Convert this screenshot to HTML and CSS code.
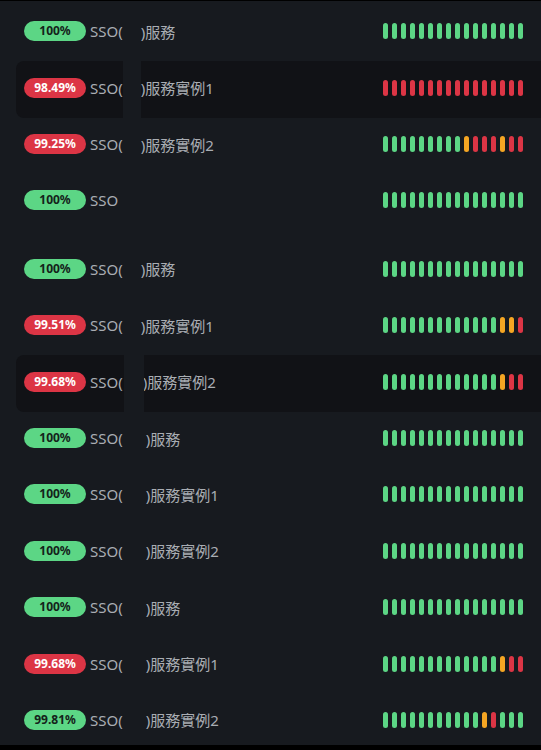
FILE: index.html
```html
<!DOCTYPE html>
<html lang="zh-Hant">
<head>
<meta charset="utf-8">
<title>SSO 服務</title>
<link rel="stylesheet" href="styles.css">
</head>
<body>
<div class="panel">
  <div class="group">
    <div class="row">
      <span class="badge ok">100%</span>
      <div class="name">SSO(<span class="redact"></span>)服務</div>
      <div class="bars"><i class="g"></i><i class="g"></i><i class="g"></i><i class="g"></i><i class="g"></i><i class="g"></i><i class="g"></i><i class="g"></i><i class="g"></i><i class="g"></i><i class="g"></i><i class="g"></i><i class="g"></i><i class="g"></i><i class="g"></i><i class="g"></i></div>
    </div>
    <div class="row hl">
      <span class="badge bad">98.49%</span>
      <div class="name">SSO(<span class="redact"></span>)服務實例1</div>
      <div class="bars"><i class="r"></i><i class="r"></i><i class="r"></i><i class="r"></i><i class="r"></i><i class="r"></i><i class="r"></i><i class="r"></i><i class="r"></i><i class="r"></i><i class="r"></i><i class="r"></i><i class="r"></i><i class="r"></i><i class="r"></i><i class="r"></i></div>
    </div>
    <div class="row">
      <span class="badge bad">99.25%</span>
      <div class="name">SSO(<span class="redact"></span>)服務實例2</div>
      <div class="bars"><i class="g"></i><i class="g"></i><i class="g"></i><i class="g"></i><i class="g"></i><i class="g"></i><i class="g"></i><i class="g"></i><i class="g"></i><i class="o"></i><i class="r"></i><i class="r"></i><i class="r"></i><i class="o"></i><i class="r"></i><i class="r"></i></div>
    </div>
    <div class="row">
      <span class="badge ok">100%</span>
      <div class="name">SSO</div>
      <div class="bars"><i class="g"></i><i class="g"></i><i class="g"></i><i class="g"></i><i class="g"></i><i class="g"></i><i class="g"></i><i class="g"></i><i class="g"></i><i class="g"></i><i class="g"></i><i class="g"></i><i class="g"></i><i class="g"></i><i class="g"></i><i class="g"></i></div>
    </div>
  </div>
  <div class="group">
    <div class="row">
      <span class="badge ok">100%</span>
      <div class="name">SSO(<span class="redact"></span>)服務</div>
      <div class="bars"><i class="g"></i><i class="g"></i><i class="g"></i><i class="g"></i><i class="g"></i><i class="g"></i><i class="g"></i><i class="g"></i><i class="g"></i><i class="g"></i><i class="g"></i><i class="g"></i><i class="g"></i><i class="g"></i><i class="g"></i><i class="g"></i></div>
    </div>
    <div class="row">
      <span class="badge bad">99.51%</span>
      <div class="name">SSO(<span class="redact"></span>)服務實例1</div>
      <div class="bars"><i class="g"></i><i class="g"></i><i class="g"></i><i class="g"></i><i class="g"></i><i class="g"></i><i class="g"></i><i class="g"></i><i class="g"></i><i class="g"></i><i class="g"></i><i class="g"></i><i class="g"></i><i class="o"></i><i class="o"></i><i class="r"></i></div>
    </div>
    <div class="row hl">
      <span class="badge bad">99.68%</span>
      <div class="name">SSO(<span class="redact mid"></span><span class="tail">)服務實例2</span></div>
      <div class="bars"><i class="g"></i><i class="g"></i><i class="g"></i><i class="g"></i><i class="g"></i><i class="g"></i><i class="g"></i><i class="g"></i><i class="g"></i><i class="g"></i><i class="g"></i><i class="g"></i><i class="g"></i><i class="o"></i><i class="r"></i><i class="r"></i></div>
    </div>
    <div class="row">
      <span class="badge ok">100%</span>
      <div class="name">SSO(<span class="redact wide"></span>)服務</div>
      <div class="bars"><i class="g"></i><i class="g"></i><i class="g"></i><i class="g"></i><i class="g"></i><i class="g"></i><i class="g"></i><i class="g"></i><i class="g"></i><i class="g"></i><i class="g"></i><i class="g"></i><i class="g"></i><i class="g"></i><i class="g"></i><i class="g"></i></div>
    </div>
    <div class="row">
      <span class="badge ok">100%</span>
      <div class="name">SSO(<span class="redact wide"></span>)服務實例1</div>
      <div class="bars"><i class="g"></i><i class="g"></i><i class="g"></i><i class="g"></i><i class="g"></i><i class="g"></i><i class="g"></i><i class="g"></i><i class="g"></i><i class="g"></i><i class="g"></i><i class="g"></i><i class="g"></i><i class="g"></i><i class="g"></i><i class="g"></i></div>
    </div>
    <div class="row">
      <span class="badge ok">100%</span>
      <div class="name">SSO(<span class="redact wide"></span>)服務實例2</div>
      <div class="bars"><i class="g"></i><i class="g"></i><i class="g"></i><i class="g"></i><i class="g"></i><i class="g"></i><i class="g"></i><i class="g"></i><i class="g"></i><i class="g"></i><i class="g"></i><i class="g"></i><i class="g"></i><i class="g"></i><i class="g"></i><i class="g"></i></div>
    </div>
    <div class="row">
      <span class="badge ok">100%</span>
      <div class="name">SSO(<span class="redact wide"></span>)服務</div>
      <div class="bars"><i class="g"></i><i class="g"></i><i class="g"></i><i class="g"></i><i class="g"></i><i class="g"></i><i class="g"></i><i class="g"></i><i class="g"></i><i class="g"></i><i class="g"></i><i class="g"></i><i class="g"></i><i class="g"></i><i class="g"></i><i class="g"></i></div>
    </div>
    <div class="row">
      <span class="badge bad">99.68%</span>
      <div class="name">SSO(<span class="redact wide"></span>)服務實例1</div>
      <div class="bars"><i class="g"></i><i class="g"></i><i class="g"></i><i class="g"></i><i class="g"></i><i class="g"></i><i class="g"></i><i class="g"></i><i class="g"></i><i class="g"></i><i class="g"></i><i class="g"></i><i class="g"></i><i class="o"></i><i class="r"></i><i class="r"></i></div>
    </div>
    <div class="row">
      <span class="badge ok">99.81%</span>
      <div class="name">SSO(<span class="redact wide"></span>)服務實例2</div>
      <div class="bars"><i class="g"></i><i class="g"></i><i class="g"></i><i class="g"></i><i class="g"></i><i class="g"></i><i class="g"></i><i class="g"></i><i class="g"></i><i class="g"></i><i class="g"></i><i class="o"></i><i class="r"></i><i class="g"></i><i class="g"></i><i class="g"></i></div>
    </div>
  </div>
</div>
</body>
</html>
```
FILE: styles.css
```css
html, body {
  margin: 0;
  padding: 0;
  overflow: hidden;
  background: #000;
}
.panel {
  margin-top: 1px;
  height: 744px;
  box-sizing: border-box;
  padding-top: 3.85px;
  background: #171a1f;
  overflow: hidden;
  font-family: "Noto Sans", "Noto Sans CJK TC", sans-serif;
}
.group + .group {
  margin-top: 12px;
}
.row {
  display: flex;
  align-items: center;
  height: 56.4px;
  box-sizing: border-box;
  padding: 0 28px 3.5px 8px;
  margin: 0 -10px 0 16px;
  border-radius: 8px 0 0 8px;
}
.row.hl {
  background: #111216;
}
.badge {
  flex: none;
  width: 62px;
  height: 20px;
  border-radius: 10px;
  display: flex;
  align-items: center;
  justify-content: center;
  font-size: 12px;
  font-weight: 700;
  line-height: 1;
}
.badge.ok {
  background: #5cd685;
  color: #14221a;
}
.badge.bad {
  background: #dc3545;
  color: #fff;
}
.name {
  flex: 1;
  align-self: stretch;
  display: flex;
  align-items: center;
  margin: 0 0 -3.5px 4px;
  padding-bottom: 3.5px;
  font-size: 15px;
  color: #a9adb3;
  white-space: nowrap;
}
.redact {
  align-self: stretch;
  width: 18px;
  background: #171a1f;
  margin-bottom: -3.5px;
}
.redact.mid {
  width: 20px;
  margin-left: 1px;
  position: relative;
  z-index: 1;
}
.tail {
  margin-left: -1px;
}
.redact.wide {
  width: 23px;
}
.bars {
  flex: none;
  display: flex;
  gap: 4px;
}
.bars i {
  display: block;
  width: 5px;
  height: 16px;
  border-radius: 3px;
}
.bars i.g { background: #5cd685; }
.bars i.r { background: #dc3545; }
.bars i.o { background: #f5a623; }
```
